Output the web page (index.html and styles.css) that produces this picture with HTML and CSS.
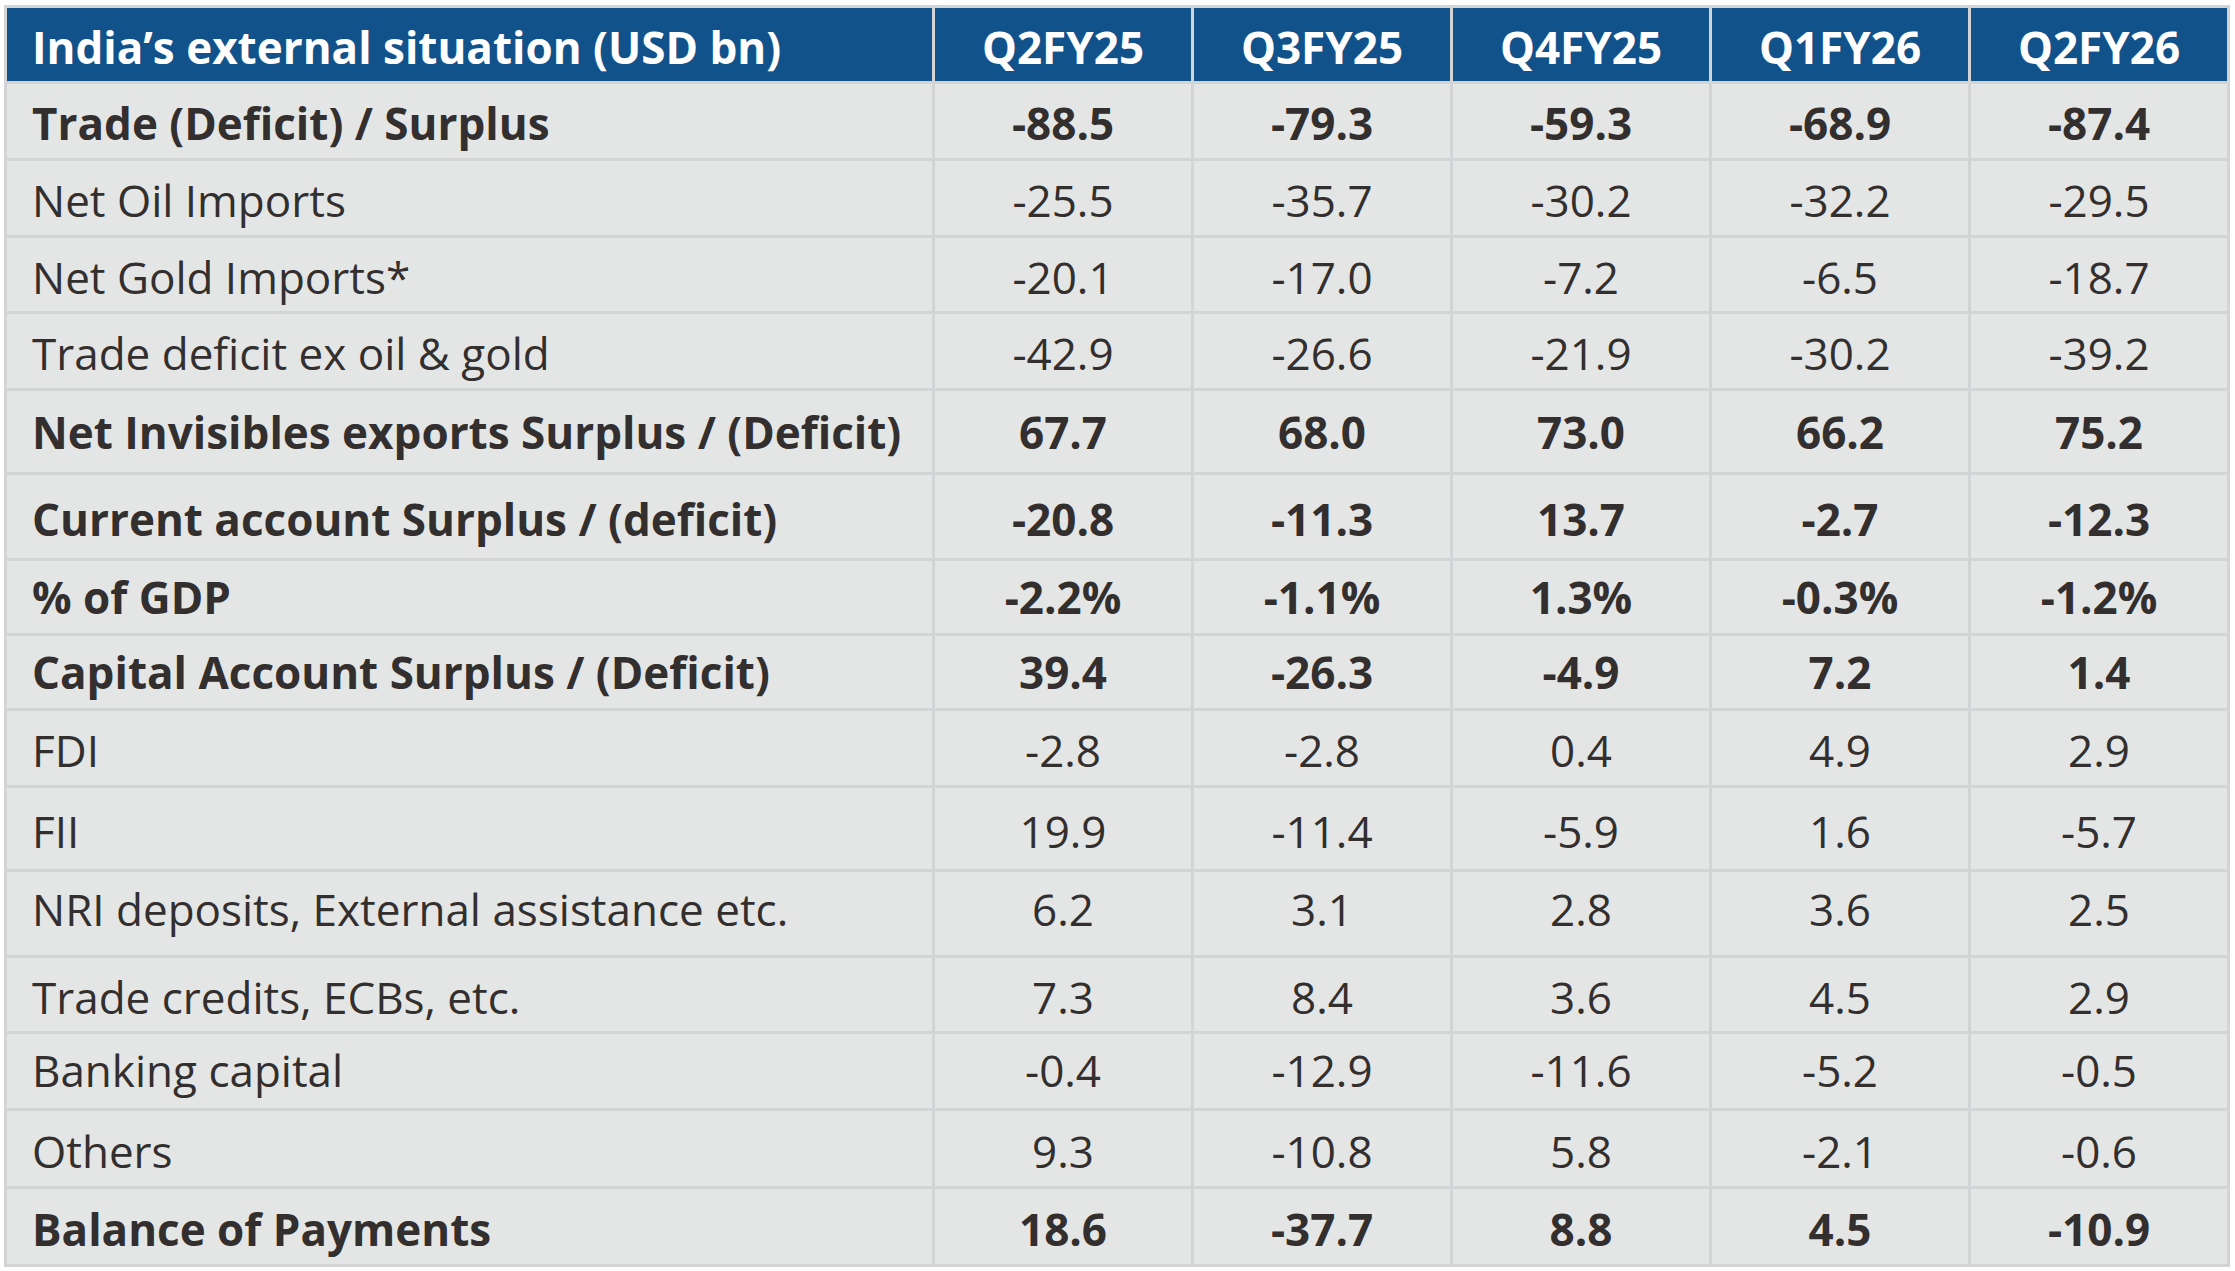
FILE: index.html
```html
<!DOCTYPE html>
<html lang="en">
<head>
<meta charset="utf-8">
<title>India's external situation</title>
<link rel="stylesheet" href="styles.css">
</head>
<body>
<div class="bop">
  <div class="cell head label">India’s external situation (USD bn)</div>
  <div class="cell head">Q2FY25</div>
  <div class="cell head">Q3FY25</div>
  <div class="cell head">Q4FY25</div>
  <div class="cell head">Q1FY26</div>
  <div class="cell head">Q2FY26</div>

  <div class="cell label b">Trade (Deficit) / Surplus</div>
  <div class="cell b">-88.5</div><div class="cell b">-79.3</div><div class="cell b">-59.3</div><div class="cell b">-68.9</div><div class="cell b">-87.4</div>

  <div class="cell label">Net Oil Imports</div>
  <div class="cell">-25.5</div><div class="cell">-35.7</div><div class="cell">-30.2</div><div class="cell">-32.2</div><div class="cell">-29.5</div>

  <div class="cell label">Net Gold Imports*</div>
  <div class="cell">-20.1</div><div class="cell">-17.0</div><div class="cell">-7.2</div><div class="cell">-6.5</div><div class="cell">-18.7</div>

  <div class="cell label">Trade deficit ex oil &amp; gold</div>
  <div class="cell">-42.9</div><div class="cell">-26.6</div><div class="cell">-21.9</div><div class="cell">-30.2</div><div class="cell">-39.2</div>

  <div class="cell label b up">Net Invisibles exports Surplus / (Deficit)</div>
  <div class="cell b up">67.7</div><div class="cell b up">68.0</div><div class="cell b up">73.0</div><div class="cell b up">66.2</div><div class="cell b up">75.2</div>

  <div class="cell label b">Current account Surplus / (deficit)</div>
  <div class="cell b">-20.8</div><div class="cell b">-11.3</div><div class="cell b">13.7</div><div class="cell b">-2.7</div><div class="cell b">-12.3</div>

  <div class="cell label b up">% of GDP</div>
  <div class="cell b up">-2.2%</div><div class="cell b up">-1.1%</div><div class="cell b up">1.3%</div><div class="cell b up">-0.3%</div><div class="cell b up">-1.2%</div>

  <div class="cell label b up">Capital Account Surplus / (Deficit)</div>
  <div class="cell b up">39.4</div><div class="cell b up">-26.3</div><div class="cell b up">-4.9</div><div class="cell b up">7.2</div><div class="cell b up">1.4</div>

  <div class="cell label">FDI</div>
  <div class="cell">-2.8</div><div class="cell">-2.8</div><div class="cell">0.4</div><div class="cell">4.9</div><div class="cell">2.9</div>

  <div class="cell label">FII</div>
  <div class="cell">19.9</div><div class="cell">-11.4</div><div class="cell">-5.9</div><div class="cell">1.6</div><div class="cell">-5.7</div>

  <div class="cell label upmore">NRI deposits, External assistance etc.</div>
  <div class="cell upmore">6.2</div><div class="cell upmore">3.1</div><div class="cell upmore">2.8</div><div class="cell upmore">3.6</div><div class="cell upmore">2.5</div>

  <div class="cell label">Trade credits, ECBs, etc.</div>
  <div class="cell">7.3</div><div class="cell">8.4</div><div class="cell">3.6</div><div class="cell">4.5</div><div class="cell">2.9</div>

  <div class="cell label upmid">Banking capital</div>
  <div class="cell upmid">-0.4</div><div class="cell upmid">-12.9</div><div class="cell upmid">-11.6</div><div class="cell upmid">-5.2</div><div class="cell upmid">-0.5</div>

  <div class="cell label">Others</div>
  <div class="cell">9.3</div><div class="cell">-10.8</div><div class="cell">5.8</div><div class="cell">-2.1</div><div class="cell">-0.6</div>

  <div class="cell label b">Balance of Payments</div>
  <div class="cell b">18.6</div><div class="cell b">-37.7</div><div class="cell b">8.8</div><div class="cell b">4.5</div><div class="cell b">-10.9</div>
</div>
</body>
</html>
```
FILE: styles.css
```css
html, body {
  margin: 0;
  padding: 0;
  background: #ffffff;
}

body {
  padding: 5px 0 0 4px;
  font-family: "Open Sans", "Noto Sans", sans-serif;
}

.bop {
  display: grid;
  width: max-content;
  grid-template-columns: 925px repeat(5, 256px);
  grid-template-rows: 73px 74px 74px 73px 74px 81px 83px 72px 72px 74px 81px 83px 73px 74px 75px 75px;
  gap: 3px;
  padding: 3px;
  background: #d2d4d5;
}

.cell {
  display: flex;
  align-items: center;
  justify-content: center;
  background: #e4e6e5;
  color: #332f2f;
  font-size: 44px;
  font-weight: 400;
  white-space: nowrap;
  padding-top: 4px;
  box-sizing: border-box;
}

.cell.up {
  padding-top: 0;
}

.cell.upmid {
  padding-top: 0;
  padding-bottom: 2px;
}

.cell.upmore {
  padding-top: 0;
  padding-bottom: 9px;
}

.cell.label {
  justify-content: flex-start;
  padding-left: 25px;
}

.cell.b {
  font-weight: 700;
}

.cell.head {
  background: #12528b;
  color: #ffffff;
  font-weight: 700;
  padding-top: 4px;
}
```
